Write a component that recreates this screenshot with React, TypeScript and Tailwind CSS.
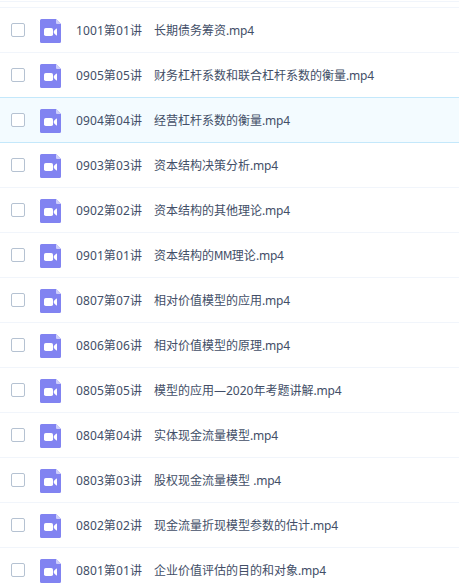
import clsx from 'clsx';

interface FileItem {
  index: string;
  title: string;
  active?: boolean;
}

const FILES: FileItem[] = [
  { index: '1001第01讲', title: '长期债务筹资.mp4' },
  { index: '0905第05讲', title: '财务杠杆系数和联合杠杆系数的衡量.mp4' },
  { index: '0904第04讲', title: '经营杠杆系数的衡量.mp4', active: true },
  { index: '0903第03讲', title: '资本结构决策分析.mp4' },
  { index: '0902第02讲', title: '资本结构的其他理论.mp4' },
  { index: '0901第01讲', title: '资本结构的MM理论.mp4' },
  { index: '0807第07讲', title: '相对价值模型的应用.mp4' },
  { index: '0806第06讲', title: '相对价值模型的原理.mp4' },
  { index: '0805第05讲', title: '模型的应用—2020年考题讲解.mp4' },
  { index: '0804第04讲', title: '实体现金流量模型.mp4' },
  { index: '0803第03讲', title: '股权现金流量模型 .mp4' },
  { index: '0802第02讲', title: '现金流量折现模型参数的估计.mp4' },
  { index: '0801第01讲', title: '企业价值评估的目的和对象.mp4' },
];

// latin runs are wide next to the hanzi, so pull them together
const TIGHT: Record<string, string> = {
  MM: "font-['DejaVu_Sans_Condensed','Liberation_Sans',sans-serif] tracking-[-0.4px]",
  '.mp4': 'tracking-[-0.2px]',
};

function VideoIcon() {
  return (
    <svg width="21" height="24" viewBox="0 0 21 24" className="ml-[15px] mt-[2px] shrink-0">
      <path d="M1.5 0H16l5 5v17.5a1.5 1.5 0 0 1-1.5 1.5h-18A1.5 1.5 0 0 1 0 22.5v-21A1.5 1.5 0 0 1 1.5 0z" fill="#8183f1" />
      <path d="M16 0l5 5h-4a1 1 0 0 1-1-1z" fill="#cdcdfa" />
      <rect x="4" y="9" width="9" height="8" rx="1.8" fill="#fff" />
      <path d="M13.8 12.1L16.1 9.7q.9-.6.9.3v6q0 .9-.9.3l-2.3-2.4z" fill="#fff" />
    </svg>
  );
}

function FileRow({ index, title, active }: FileItem) {
  return (
    <li
      className={clsx(
        'flex items-center border-b',
        active ? '-mt-px h-[46px] border-t border-[#c4e8fb] bg-[#f3fbff]' : 'h-[45px] border-[#f1f5fb] bg-white',
      )}
    >
      <span className="ml-[11px] size-[14px] shrink-0 rounded-[2px] border border-[#b5c2d2] bg-white" />
      <VideoIcon />
      <span className="ml-[15px] mt-px flex whitespace-pre text-[12px] leading-[18px]">
        <span className="w-[78px] tracking-[0.1px]">{index}　</span>
        <span>
          {title.split(/(MM|\.mp4)/).map((part, i) => (
            <span key={i} className={TIGHT[part]}>{part}</span>
          ))}
        </span>
      </span>
    </li>
  );
}

export default function App() {
  return (
    <div className="h-[583px] w-[459px] overflow-hidden bg-white font-['Noto_Sans','Noto_Sans_CJK_SC',sans-serif] text-[#424e67]">
      <div className="mt-px h-[7px] border-y border-[#f1f5fb]" />
      <ul>
        {FILES.map((file) => (
          <FileRow key={file.index} {...file} />
        ))}
      </ul>
    </div>
  );
}
